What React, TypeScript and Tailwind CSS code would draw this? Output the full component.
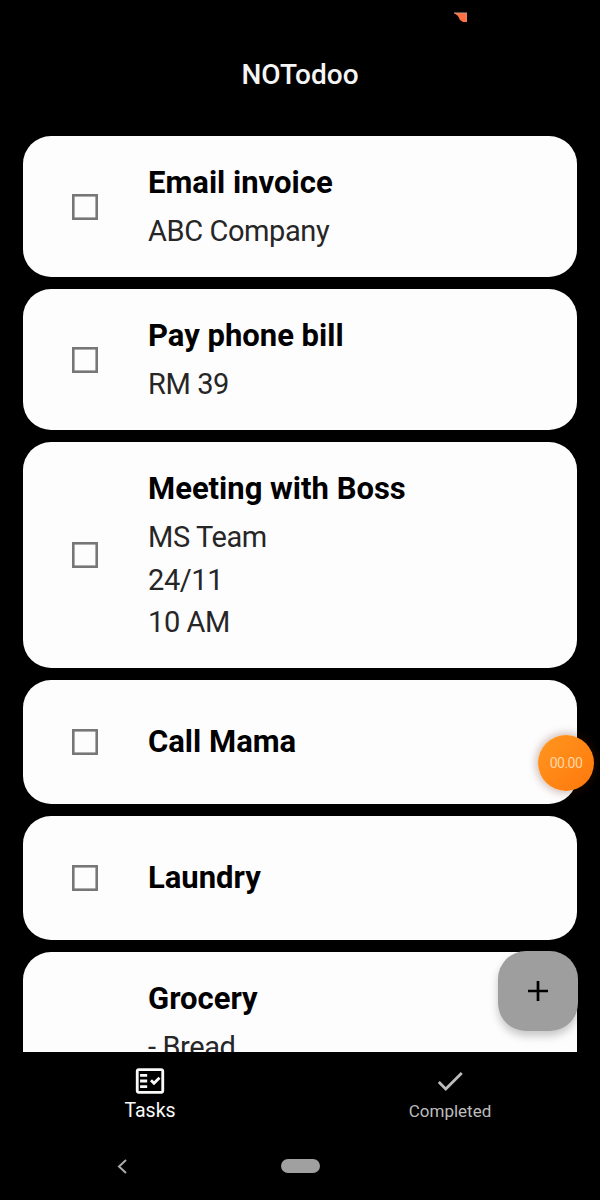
type Task = { title: string; lines: string[]; height: string };

const tasks: Task[] = [
  { title: "Email invoice", lines: ["ABC Company"], height: "h-[141px]" },
  { title: "Pay phone bill", lines: ["RM 39"], height: "h-[141px]" },
  { title: "Meeting with Boss", lines: ["MS Team", "24/11", "10 AM"], height: "h-[226px]" },
  { title: "Call Mama", lines: [], height: "h-[124px]" },
  { title: "Laundry", lines: [], height: "h-[124px]" },
  { title: "Grocery", lines: ["- Bread"], height: "h-[268px]" },
];

function TaskCard({ task }: { task: Task }) {
  const hasLines = task.lines.length > 0;
  return (
    <li className={`flex shrink-0 items-center rounded-[28px] bg-[#fefdfe] pl-[49px] ${task.height}`}>
      <svg role="checkbox" aria-checked="false" aria-label={task.title} className="shrink-0" width="26" height="26" viewBox="0 0 26 26">
        <rect x="1.300" y="1.300" width="23.400" height="23.400" fill="none" stroke="#757875" strokeWidth="2.600" />
      </svg>
      <div className={`ml-[50px] flex flex-col ${hasLines ? "self-start pt-[24px]" : "-mt-px"}`}>
        <h2 className="text-[31px] leading-[45px] font-bold text-black">{task.title}</h2>
        {hasLines && (
          <div className="mt-[5px] text-[29px] leading-[42.5px] tracking-[-0.4px] text-[#262626]">
            {task.lines.map((line) => (
              <p key={line}>{line}</p>
            ))}
          </div>
        )}
      </div>
    </li>
  );
}

export default function App() {
  return (
    <div className="relative flex h-[1200px] w-[600px] flex-col overflow-hidden bg-black font-[Roboto,sans-serif]">
      <div className="flex h-[24px] shrink-0 justify-end pt-[12px] pr-[133px]">
        <svg width="13" height="10" viewBox="0 0 13 10">
          <path d="M0 1H13V10H9L6 8L4 4Z" fill="#ff7043" />
          <path d="M0 1H13V10" fill="none" stroke="#c49a8a" strokeWidth="1" />
        </svg>
      </div>
      <header className="flex h-[112px] shrink-0 items-start justify-center pt-[34px]">
        <h1 className="text-[28px] leading-[34px] font-medium text-[#f5f5f5]">NOTodoo</h1>
      </header>
      <main className="h-[916px] shrink-0 overflow-hidden px-[23px]">
        <ul className="flex flex-col gap-[12px]">
          {tasks.map((task) => (
            <TaskCard key={task.title} task={task} />
          ))}
        </ul>
      </main>
      <nav className="flex h-[80px] shrink-0">
        <button className="flex flex-1 flex-col items-center pt-[12px] text-[#fafafa]">
          <svg width="34" height="34" viewBox="0 0 24 24" fill="currentColor">
            <path fillRule="evenodd" d="M20 3H4c-1.100 0-2 .9-2 2v14c0 1.100.9 2 2 2h16c1.100 0 2-.9 2-2V5c0-1.100-.9-2-2-2zm0 16H4V5h16v14z" />
            <path d="M19.410 10.420l-1.420-1.420-3.170 3.170-1.410-1.420L12 12.160 14.820 15zM5 7h5v2H5zM5 11h5v2H5zM5 15h5v2H5z" />
          </svg>
          <span className="mt-[2px] text-[19.5px] leading-[22px]">Tasks</span>
        </button>
        <button className="flex flex-1 flex-col items-center pt-[12px] text-[#bdbdbd]">
          <svg width="34" height="34" viewBox="0 0 24 24" fill="currentColor">
            <path d="M9 16.170L4.830 12l-1.420 1.410L9 19 21 7l-1.410-1.410z" />
          </svg>
          <span className="mt-[3px] text-[17px] leading-[20px]">Completed</span>
        </button>
      </nav>
      <div className="flex flex-1 items-center pl-[117px]">
        <svg width="10" height="15" viewBox="0 0 10 15" fill="none" stroke="#aaa" strokeWidth="2">
          <path d="M9 1L2 7.500L9 14" />
        </svg>
        <div className="ml-[153.5px] h-[14px] w-[39px] rounded-full bg-[#a0a0a0]" />
      </div>
      <div className="absolute top-[735px] left-[538px] flex size-[56px] items-center justify-center rounded-full bg-linear-to-br from-[#ff961f] to-[#ff7709] shadow-[0_0_8px_2px_rgba(90,35,10,0.3)]">
        <span className="text-[14px] leading-none tracking-[-0.5px] text-[#ffd6a4]">00.00</span>
      </div>
      <button aria-label="Add task" className="absolute top-[951px] left-[498px] flex size-[80px] items-center justify-center rounded-[28px] bg-[#9e9e9e] shadow-[0_5px_8px_rgba(0,0,0,0.22)]">
        <svg width="20" height="20" viewBox="0 0 20 20" fill="none" stroke="black" strokeWidth="2.700">
          <path d="M10 0V20M0 10H20" />
        </svg>
      </button>
    </div>
  );
}
